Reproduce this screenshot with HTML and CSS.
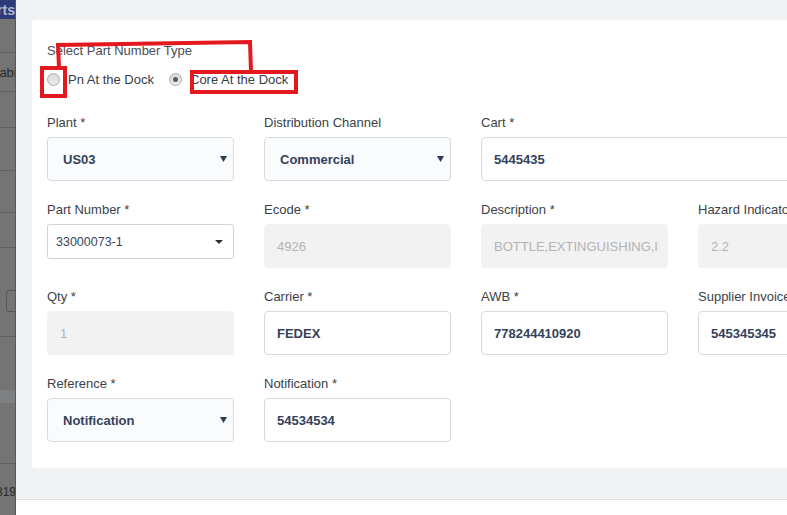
FILE: index.html
```html
<!DOCTYPE html>
<html>
<head>
<meta charset="utf-8">
<link rel="stylesheet" href="styles.css">
</head>
<body>
<div class="page">
  <aside class="behind">
    <div class="b-head"><span>Parts</span></div>
    <div class="b-row r1"></div>
    <div class="b-row r2"><span class="b-text shift-cab">Cabinet</span></div>
    <div class="b-row r3"></div>
    <div class="b-row r4"></div>
    <div class="b-row r5"></div>
    <div class="b-row r6"></div>
    <div class="b-row r7"><div class="b-input"></div></div>
    <div class="b-plain r8"></div>
    <div class="b-band"></div>
    <div class="b-row r9"></div>
    <div class="b-plain r10"><span class="b-text shift-num">319</span></div>
  </aside>

  <main class="modal">
    <div class="modal-body">
      <section class="card">
        <div class="type-label">Select Part Number Type</div>
        <div class="radio-row">
          <label class="radio"><span class="dot"></span><span>Pn At the Dock</span></label>
          <label class="radio checked"><span class="dot"></span><span>Core At the Dock</span></label>
        </div>

        <div class="grid">
          <div class="field">
            <label class="lbl">Plant *</label>
            <div class="control select"><span>US03</span>
              <svg class="arrow" width="7" height="6" viewBox="0 0 7 6"><polygon points="0,0 7,0 3.5,6"/></svg>
            </div>
          </div>
          <div class="field">
            <label class="lbl">Distribution Channel</label>
            <div class="control select"><span>Commercial</span>
              <svg class="arrow" width="7" height="6" viewBox="0 0 7 6"><polygon points="0,0 7,0 3.5,6"/></svg>
            </div>
          </div>
          <div class="field span2">
            <label class="lbl">Cart *</label>
            <input class="control input" value="5445435" readonly>
          </div>

          <div class="field">
            <label class="lbl">Part Number *</label>
            <div class="control pn-select"><span>33000073-1</span>
              <svg class="caret" width="8" height="4" viewBox="0 0 8 4"><polygon points="0,0 8,0 4,4"/></svg>
            </div>
          </div>
          <div class="field">
            <label class="lbl">Ecode *</label>
            <input class="control input off" value="4926" disabled>
          </div>
          <div class="field">
            <label class="lbl">Description *</label>
            <input class="control input off desc" value="BOTTLE,EXTINGUISHING,INERT GAS" disabled>
          </div>
          <div class="field">
            <label class="lbl">Hazard Indicator</label>
            <input class="control input off" value="2.2" disabled>
          </div>

          <div class="field">
            <label class="lbl">Qty *</label>
            <input class="control input off" value="1" disabled>
          </div>
          <div class="field">
            <label class="lbl">Carrier *</label>
            <input class="control input" value="FEDEX" readonly>
          </div>
          <div class="field">
            <label class="lbl">AWB *</label>
            <input class="control input" value="778244410920" readonly>
          </div>
          <div class="field">
            <label class="lbl">Supplier Invoice *</label>
            <input class="control input" value="545345345" readonly>
          </div>

          <div class="field">
            <label class="lbl">Reference *</label>
            <div class="control select"><span>Notification</span>
              <svg class="arrow" width="7" height="6" viewBox="0 0 7 6"><polygon points="0,0 7,0 3.5,6"/></svg>
            </div>
          </div>
          <div class="field">
            <label class="lbl">Notification *</label>
            <input class="control input" value="54534534" readonly>
          </div>
        </div>
      </section>
    </div>
    <footer class="modal-footer"></footer>
  </main>

  <svg class="annot" width="787" height="515" viewBox="0 0 787 515">
    <rect x="42" y="68" width="23" height="28" fill="none" stroke="#e3191f" stroke-width="4"/>
    <rect x="192" y="72" width="104" height="20" fill="none" stroke="#e3191f" stroke-width="4"/>
    <polyline points="59,67 58,45 250,42 251,71" fill="none" stroke="#e3191f" stroke-width="4" stroke-linejoin="miter"/>
  </svg>
</div>
</body>
</html>
```

FILE: styles.css
```css
html, body {
  margin: 0;
  padding: 0;
}

body {
  width: 787px;
  height: 515px;
  overflow: hidden;
  font-family: "Liberation Sans", Arial, sans-serif;
  background: #ffffff;
}

.page {
  position: relative;
  display: flex;
  width: 787px;
  height: 515px;
}

/* page behind the modal (dimmed) */
.behind {
  width: 15px;
  flex: none;
  background: #747474;
  border-right: 1px solid #585858;
  display: flex;
  flex-direction: column;
  overflow: hidden;
}

.b-head {
  height: 19px;
  flex: none;
  background: #2c3a78;
  color: #b3b8cc;
  font-size: 14px;
  font-weight: bold;
  display: flex;
  justify-content: flex-end;
  align-items: center;
  overflow: hidden;
  white-space: nowrap;
}

.b-row {
  flex: none;
  border-bottom: 1px solid #606060;
  overflow: hidden;
  white-space: nowrap;
  font-size: 13px;
  color: #2a2a2a;
  display: flex;
  align-items: center;
}

.b-plain {
  flex: none;
  overflow: hidden;
  white-space: nowrap;
  font-size: 13px;
  color: #2a2a2a;
  display: flex;
  align-items: center;
}

.r1 { height: 33px; }
.r2 { height: 38px; }
.r3 { height: 35px; }
.r4 { height: 42px; }
.r5 { height: 41px; }
.r6 { height: 34px; }
.r7 { height: 88px; align-items: flex-start; }
.r8 { height: 53px; }
.r9 { height: 60px; }
.r10 { height: 52px; align-items: flex-start; }

.b-band {
  height: 13px;
  flex: none;
  background: #7f8081;
}

.b-input {
  margin-top: 42px;
  margin-left: 6px;
  width: 14px;
  height: 22px;
  box-sizing: border-box;
  border: 1px solid #555555;
  border-radius: 3px;
  flex: none;
}

.b-text { flex: none; }
.shift-cab { margin-left: -10px; }
.shift-num {
  margin-left: -4px;
  margin-top: 21px;
  font-size: 12px;
  line-height: 14px;
}

/* modal */
.modal {
  flex: 1;
  min-width: 0;
  display: flex;
  flex-direction: column;
  background: #f1f2f4;
  overflow: hidden;
}

.modal-body {
  height: 499px;
  flex: none;
  box-sizing: border-box;
  padding: 20px 0 0 16px;
  overflow: hidden;
}

.modal-footer {
  flex: 1;
  background: #ffffff;
  border-top: 1px solid #dcdfe4;
}

.card {
  width: 900px;
  box-sizing: border-box;
  background: #ffffff;
  border-radius: 4px;
  padding: 23px 0 26px 15px;
}

.type-label {
  font-size: 13px;
  line-height: 16px;
  color: #4a4e57;
}

.radio-row {
  margin-top: 12px;
  height: 16px;
  display: flex;
  align-items: center;
  gap: 15px;
}

.radio {
  display: flex;
  align-items: center;
  gap: 8px;
  font-size: 13px;
  color: #383d47;
}

.dot {
  width: 13px;
  height: 13px;
  box-sizing: border-box;
  border-radius: 50%;
  border: 1px solid #adadad;
  background: linear-gradient(#d9d9d9, #ececec);
  display: flex;
  align-items: center;
  justify-content: center;
  flex: none;
}

.radio.checked .dot::after {
  content: "";
  width: 5px;
  height: 5px;
  border-radius: 50%;
  background: #5c5c5c;
}

.grid {
  margin-top: 28px;
  display: grid;
  grid-template-columns: repeat(4, 187px);
  column-gap: 30px;
  row-gap: 21px;
  align-items: start;
}

.span2 { grid-column: span 2; }

.field {
  display: flex;
  flex-direction: column;
  gap: 6px;
  min-width: 0;
}

.lbl {
  font-size: 13px;
  line-height: 16px;
  color: #3b3f48;
  white-space: nowrap;
}

.control {
  width: 100%;
  height: 44px;
  box-sizing: border-box;
  border: 1px solid #d6dae1;
  border-radius: 4px;
  display: flex;
  align-items: center;
  margin: 0;
  font-family: "Liberation Sans", Arial, sans-serif;
  font-size: 13px;
  outline: none;
}

.select {
  background: #fafbfc;
  padding: 0 6px 0 15px;
  justify-content: space-between;
  font-weight: bold;
  color: #34415b;
}

.arrow polygon { fill: #2e3b55; }

.pn-select {
  height: 35px;
  background: #ffffff;
  border-color: #cfd4db;
  border-radius: 3px;
  padding: 0 10px 0 8px;
  justify-content: space-between;
  font-size: 12.5px;
  color: #3a4557;
}

.caret polygon { fill: #2f2f2f; }

.input {
  background: #ffffff;
  padding: 0 12px;
  font-weight: bold;
  color: #34415b;
}

.input.off {
  background: #f2f2f2;
  border-color: #f2f2f2;
  color: #b3b3b3;
  font-weight: normal;
  -webkit-text-fill-color: #b3b3b3;
  opacity: 1;
}

.input.desc {
  padding-right: 8px;
}

.annot {
  position: absolute;
  left: 0;
  top: 0;
  pointer-events: none;
}
```
